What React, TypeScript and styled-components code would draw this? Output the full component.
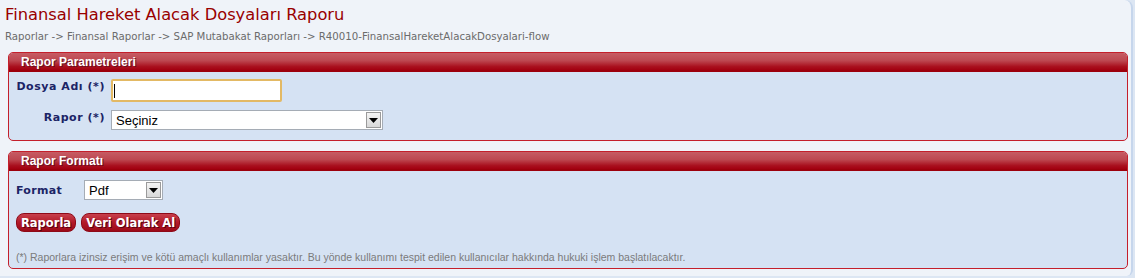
import React from "react";
import styled, { createGlobalStyle } from "styled-components";

const GlobalStyle = createGlobalStyle`
  html, body {
    margin: 0;
    padding: 0;
    background: #dce6f3;
  }
`;

const App = () => {
  return (
    <>
      <GlobalStyle />
      <Page>
        <Title>Finansal Hareket Alacak Dosyaları Raporu</Title>
        <Breadcrumb>
          Raporlar -&gt; Finansal Raporlar -&gt; SAP Mutabakat Raporları -&gt;
          R40010-FinansalHareketAlacakDosyalari-flow
        </Breadcrumb>

        <Panel>
          <PanelHeader>Rapor Parametreleri</PanelHeader>
          <ParamBody>
            <Label>Dosya Adı (*)</Label>
            <InputWrap>
              <TextInput type="text" />
              <Caret />
            </InputWrap>

            <Label>Rapor (*)</Label>
            <SelectBox width="272px">
              <SelectText>Seçiniz</SelectText>
              <ArrowBtn>
                <svg width="9" height="5" viewBox="0 0 9 5">
                  <path d="M0 0h9L4.5 5z" fill="#000" />
                </svg>
              </ArrowBtn>
            </SelectBox>
          </ParamBody>
        </Panel>

        <Panel>
          <PanelHeader>Rapor Formatı</PanelHeader>
          <FormatBody>
            <FormatRow>
              <FormatLabel>Format</FormatLabel>
              <SelectBox width="79px">
                <SelectText>Pdf</SelectText>
                <ArrowBtn>
                  <svg width="9" height="5" viewBox="0 0 9 5">
                    <path d="M0 0h9L4.5 5z" fill="#000" />
                  </svg>
                </ArrowBtn>
              </SelectBox>
            </FormatRow>

            <Buttons>
              <PillButton>Raporla</PillButton>
              <PillButton>Veri Olarak Al</PillButton>
            </Buttons>

            <Note>
              (*) Raporlara izinsiz erişim ve kötü amaçlı kullanımlar yasaktır. Bu
              yönde kullanımı tespit edilen kullanıcılar hakkında hukuki işlem
              başlatılacaktır.
            </Note>
          </FormatBody>
        </Panel>
      </Page>
    </>
  );
};

export default App;

const Page = styled.div`
  width: 1133px;
  height: 276px;
  box-sizing: border-box;
  padding: 3px 5px 0 5px;
  background: #eff3f9;
  border-right: 2px solid #c6d6ec;
  border-top-right-radius: 8px;
  border-bottom-right-radius: 6px;
`;

const Title = styled.h1`
  margin: 0;
  font-family: "DejaVu Sans", Verdana, sans-serif;
  font-weight: normal;
  font-size: 16.3px;
  line-height: 24px;
  color: #990000;
`;

const Breadcrumb = styled.div`
  margin: 3px 0 0 0;
  font-family: "DejaVu Sans", Verdana, sans-serif;
  font-size: 10.2px;
  line-height: 14px;
  color: #6b6b6b;
`;

const Panel = styled.section`
  margin: 8px 0 0 3px;
  width: 1120px;
  box-sizing: border-box;
  border: 1px solid #c41f2b;
  border-radius: 5px;
  background: #d5e2f3;
  overflow: hidden;

  & + & {
    margin-top: 10px;
  }
`;

const PanelHeader = styled.div`
  height: 19px;
  box-sizing: border-box;
  padding: 1px 0 0 12px;
  background: linear-gradient(#c65c64 0%, #bd4750 45%, #a9101e 80%, #a20010 100%);
  border-bottom: 2px solid #9c000c;
  font-family: "Liberation Sans", Arial, sans-serif;
  font-weight: bold;
  font-size: 12px;
  line-height: 16px;
  color: #ffffff;
  text-shadow: 1px 1px 0 #6b1020;
`;

const ParamBody = styled.div`
  display: grid;
  grid-template-columns: 96px auto;
  column-gap: 6px;
  row-gap: 8px;
  align-items: center;
  justify-content: start;
  padding: 7px 0 10px 0;
`;

const Label = styled.label`
  justify-self: end;
  align-self: start;
  margin-top: 1px;
  font-family: "DejaVu Sans", Verdana, sans-serif;
  font-weight: bold;
  font-size: 11px;
  line-height: 14px;
  letter-spacing: 0.55px;
  color: #1b2466;
`;

const InputWrap = styled.div`
  position: relative;
  width: 171px;
  height: 23px;
`;

const TextInput = styled.input`
  width: 100%;
  height: 100%;
  box-sizing: border-box;
  margin: 0;
  border: 2px solid #e3b964;
  border-radius: 2px;
  background: #fff;
  outline: none;
`;

const Caret = styled.span`
  position: absolute;
  left: 3px;
  top: 5px;
  width: 1px;
  height: 14px;
  background: #000;
`;

const SelectBox = styled.div<{ width: string }>`
  display: flex;
  align-items: stretch;
  width: ${(p) => p.width};
  height: 20px;
  box-sizing: border-box;
  border: 1px solid #a5acb5;
  background: #fff;
`;

const SelectText = styled.span`
  flex: 1;
  padding-left: 4px;
  font-family: "Liberation Sans", Arial, sans-serif;
  font-size: 13px;
  line-height: 19px;
  color: #000;
`;

const ArrowBtn = styled.span`
  width: 15px;
  margin: 1px;
  display: flex;
  align-items: center;
  justify-content: center;
  box-sizing: border-box;
  border: 1px solid #9a9a9a;
  background: linear-gradient(#f4f4f4, #d8d8d8);
`;

const FormatBody = styled.div`
  display: flex;
  flex-direction: column;
  padding: 9px 0 4px 7px;
`;

const FormatRow = styled.div`
  display: flex;
  align-items: center;
  gap: 20px;
`;

const FormatLabel = styled.span`
  width: 48px;
  font-family: "DejaVu Sans", Verdana, sans-serif;
  font-weight: bold;
  font-size: 11px;
  letter-spacing: 0.3px;
  color: #1b2466;
`;

const Buttons = styled.div`
  display: flex;
  gap: 5px;
  margin-top: 13px;
`;

const PillButton = styled.button`
  height: 19px;
  margin: 0;
  padding: 0 4px;
  border: 1px solid #8e0a18;
  border-radius: 8px;
  background: linear-gradient(#c7404c 0%, #b31a28 50%, #9c0a18 100%);
  font-family: "DejaVu Sans", Verdana, sans-serif;
  font-weight: bold;
  font-size: 11.5px;
  line-height: 16px;
  color: #fff;
  text-shadow: 1px 1px 0 #5a0010;
  cursor: pointer;
`;

const Note = styled.p`
  margin: 18px 0 0 0;
  font-family: "Liberation Sans", Arial, sans-serif;
  font-size: 10.5px;
  line-height: 14px;
  color: #7b7b7b;
`;
